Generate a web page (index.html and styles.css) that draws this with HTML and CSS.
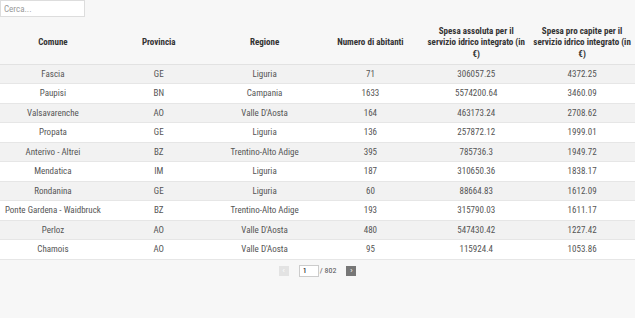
FILE: index.html
```html
<!DOCTYPE html>
<html lang="it">
  <head>
    <meta charset="UTF-8" />
    <title>Servizio idrico integrato</title>
    <link rel="stylesheet" href="styles.css">
  </head>
  <body>
    <div class="page">
      <input class="search" type="text" placeholder="Cerca..." />
      <table class="data">
        <thead>
          <tr>
            <th>Comune</th>
            <th>Provincia</th>
            <th>Regione</th>
            <th>Numero di abitanti</th>
            <th>Spesa assoluta per il servizio idrico integrato (in €)</th>
            <th>Spesa pro capite per il servizio idrico integrato (in €)</th>
          </tr>
        </thead>
        <tbody>
          <tr><td>Fascia</td><td>GE</td><td>Liguria</td><td>71</td><td>306057.25</td><td>4372.25</td></tr>
          <tr><td>Paupisi</td><td>BN</td><td>Campania</td><td>1633</td><td>5574200.64</td><td>3460.09</td></tr>
          <tr><td>Valsavarenche</td><td>AO</td><td>Valle D'Aosta</td><td>164</td><td>463173.24</td><td>2708.62</td></tr>
          <tr><td>Propata</td><td>GE</td><td>Liguria</td><td>136</td><td>257872.12</td><td>1999.01</td></tr>
          <tr><td>Anterivo - Altrei</td><td>BZ</td><td>Trentino-Alto Adige</td><td>395</td><td>785736.3</td><td>1949.72</td></tr>
          <tr><td>Mendatica</td><td>IM</td><td>Liguria</td><td>187</td><td>310650.36</td><td>1838.17</td></tr>
          <tr><td>Rondanina</td><td>GE</td><td>Liguria</td><td>60</td><td>88664.83</td><td>1612.09</td></tr>
          <tr><td>Ponte Gardena - Waidbruck</td><td>BZ</td><td>Trentino-Alto Adige</td><td>193</td><td>315790.03</td><td>1611.17</td></tr>
          <tr><td>Perloz</td><td>AO</td><td>Valle D'Aosta</td><td>480</td><td>547430.42</td><td>1227.42</td></tr>
          <tr><td>Chamois</td><td>AO</td><td>Valle D'Aosta</td><td>95</td><td>115924.4</td><td>1053.86</td></tr>
        </tbody>
      </table>
      <div class="pager">
        <button class="pg-btn prev" disabled>‹</button>
        <input class="pg-input" type="text" value="1" />
        <span class="pg-total">/ 802</span>
        <button class="pg-btn next">›</button>
      </div>
    </div>
  </body>
</html>
```
FILE: styles.css
```css
* {
  box-sizing: border-box;
}
html,
body {
  margin: 0;
  height: 100%;
}
body {
  font-family: "Roboto Condensed", "Roboto", sans-serif;
  font-stretch: condensed;
  background: #f7f7f7;
  color: #555;
  font-size: 9px;
}
.page {
  display: flex;
  flex-direction: column;
}
.search {
  width: 85px;
  height: 17px;
  border: 1px solid #ddd;
  background: #fff;
  font-family: inherit;
  font-size: 9px;
  padding: 0 3px;
  outline: none;
}
.search::placeholder {
  color: #999;
}
.data {
  width: 100%;
  margin-top: 5px;
  border-collapse: collapse;
  table-layout: fixed;
}
.data th {
  color: #333;
  font-weight: bold;
  height: 42px;
  padding: 0 2px;
  text-align: center;
  vertical-align: middle;
  line-height: 11.5px;
  border-bottom: 1px solid #e2e2e2;
}
.data td {
  text-align: center;
  height: 19.5px;
  padding: 0 4px;
  white-space: nowrap;
  border-bottom: 1px solid #e6e6e6;
}
.data tbody tr:nth-child(odd) {
  background: #f2f2f2;
}
.data tbody tr:nth-child(even) {
  background: #fff;
}
.pager {
  display: flex;
  justify-content: center;
  align-items: center;
  gap: 5px;
  margin-top: 5px;
}
.pg-btn {
  width: 10px;
  height: 10px;
  border: none;
  padding: 0;
  font-size: 7px;
  line-height: 10px;
  color: #fff;
}
.prev {
  background: #e3e3e3;
  margin-right: 5px;
}
.next {
  background: #777;
  margin-left: 5px;
}
.pg-input {
  width: 20px;
  height: 12px;
  border: 1px solid #ccc;
  background: #fff;
  font-family: inherit;
  font-size: 8px;
  padding: 0 3px;
}
.pg-total {
  font-size: 8px;
  margin-left: -4px;
}
```
